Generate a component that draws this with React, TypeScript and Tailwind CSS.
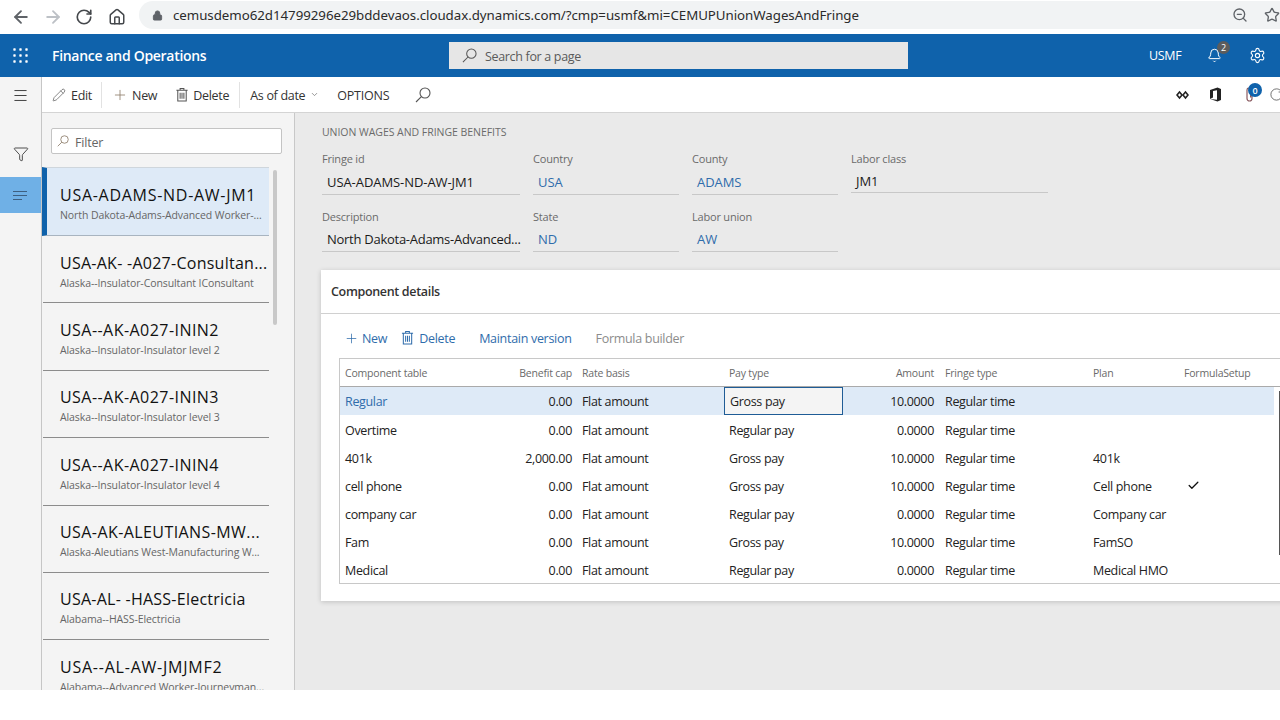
import React from "react";
import { ArrowLeft, ArrowRight, RotateCw, Home, Lock, ZoomOut, Star, Bell, Settings, Pencil, Plus, ChevronDown, Menu, Funnel, Check } from "lucide-react";

const items = [
  ["USA-ADAMS-ND-AW-JM1", "North Dakota-Adams-Advanced Worker-...", "tracking-[0.72px]"],
  ["USA-AK- -A027-Consultan...", "Alaska--Insulator-Consultant IConsultant", "tracking-[0.26px]"],
  ["USA--AK-A027-ININ2", "Alaska--Insulator-Insulator level 2", "tracking-[0.45px]"],
  ["USA--AK-A027-ININ3", "Alaska--Insulator-Insulator level 3", "tracking-[0.45px]"],
  ["USA--AK-A027-ININ4", "Alaska--Insulator-Insulator level 4", "tracking-[0.45px]"],
  ["USA-AK-ALEUTIANS-MW...", "Alaska-Aleutians West-Manufacturing W...", "tracking-[0.42px]"],
  ["USA-AL- -HASS-Electricia", "Alabama--HASS-Electricia", "tracking-[0.25px]"],
  ["USA--AL-AW-JMJMF2", "Alabama--Advanced Worker-Journeyman...", "tracking-[0.77px]"],
];

const rows = [
  ["Regular", "0.00", "Flat amount", "Gross pay", "10.0000", "Regular time", "", false],
  ["Overtime", "0.00", "Flat amount", "Regular pay", "0.0000", "Regular time", "", false],
  ["401k", "2,000.00", "Flat amount", "Gross pay", "10.0000", "Regular time", "401k", false],
  ["cell phone", "0.00", "Flat amount", "Gross pay", "10.0000", "Regular time", "Cell phone", true],
  ["company car", "0.00", "Flat amount", "Regular pay", "0.0000", "Regular time", "Company car", false],
  ["Fam", "0.00", "Flat amount", "Gross pay", "10.0000", "Regular time", "FamSO", false],
  ["Medical", "0.00", "Flat amount", "Regular pay", "0.0000", "Regular time", "Medical HMO", false],
] as const;

const gridCols = "grid grid-cols-[138px_99px_147px_119px_96px_149px_91px_101px]";

function SearchGlyph({ className }: { className: string }) {
  return (
    <svg className={className} viewBox="0 0 16 16" fill="none" stroke="currentColor" strokeWidth="1.1">
      <circle cx="10" cy="6" r="5" />
      <path d="M6.4 9.6 L1 15" />
    </svg>
  );
}

function TrashGlyph({ className }: { className: string }) {
  return (
    <svg className={className} viewBox="0 0 14 16" fill="none" stroke="currentColor" strokeWidth="1.1">
      <path d="M1 3.5 H13 M5 3.5 V1.5 H9 V3.5 M2.5 3.5 V15 H11.5 V3.5 M5 6 V12.5 M7 6 V12.5 M9 6 V12.5" />
    </svg>
  );
}

function Field({ label, value, blue, width, tight, second, short }: { label: string; value: string; blue?: boolean; width: string; tight?: boolean; second?: boolean; short?: boolean }) {
  return (
    <div className={width}>
      <div className={`${second ? "h-[19px] pt-px" : "h-[18px]"} box-border text-[11px] leading-[18px] tracking-[-0.2px] text-[#6a6a6a]`}>{label}</div>
      <div className={`${short ? "h-[25px] pt-[3px]" : second ? "h-[26px] pt-[3px]" : "h-[27px] pt-[4px]"} box-border whitespace-nowrap border-b border-[#c8c8c8] pl-[5px] text-[13px] leading-[20px] ${tight ? "tracking-[-0.27px]" : "tracking-[-0.07px]"} ${blue ? "text-[#2f6cab]" : "text-[#1a1a1a]"}`}>{value}</div>
    </div>
  );
}

export default function App() {
  return (
    <div className="h-[720px] w-[1280px] overflow-hidden bg-white font-['Open_Sans','Noto_Sans',sans-serif]">
      <div className="flex h-[690px] flex-col overflow-hidden">
        {/* browser bar */}
        <div className="flex h-[34px] shrink-0 items-center overflow-hidden bg-white">
          <div className="flex w-[139px] shrink-0 items-center text-[#5f6368]">
            <ArrowLeft className="ml-[11px] h-[20px] w-[20px]" strokeWidth={2.2} />
            <ArrowRight className="ml-[12px] h-[20px] w-[20px] text-[#bdc1c6]" strokeWidth={2.2} />
            <RotateCw className="ml-[12px] h-[18px] w-[18px] text-[#45484c]" strokeWidth={2.2} />
            <Home className="ml-[15px] h-[18px] w-[18px] text-[#45484c]" strokeWidth={2} />
          </div>
          <div className="flex h-[28px] w-[1160px] shrink-0 -translate-y-[2px] items-center rounded-l-full bg-[#f1f3f4] pl-[13px] *:shrink-0">
            <Lock className="h-[11px] w-[11px] text-[#5f6368]" fill="#5f6368" />
            <span className="ml-[10px] w-[1059px] whitespace-nowrap pt-[2px] text-[13.3px] tracking-[-0.04px] text-[#2b2b2b] font-['Noto_Sans',sans-serif]">cemusdemo62d14799296e29bddevaos.cloudax.dynamics.com/?cmp=usmf&amp;mi=CEMUPUnionWagesAndFringe</span>
            <ZoomOut className="h-[16px] w-[16px] text-[#5f6368]" />
            <Star className="ml-[16px] h-[16px] w-[16px] text-[#5f6368]" />
          </div>
        </div>
        {/* blue header */}
        <div className="flex h-[43px] shrink-0 items-center bg-[#0f62ab] text-white">
          <svg className="ml-[13px] h-[15px] w-[15px]" viewBox="0 0 15 15" fill="#fff">
            {[1.5, 7.5, 13.5].flatMap((y) => [1.5, 7.5, 13.5].map((x) => <rect key={`${x}-${y}`} x={x - 1.2} y={y - 1.2} width="2.4" height="2.4" rx="0.6" />))}
          </svg>
          <div className="ml-[24px] w-[397px] text-[14px] font-semibold tracking-[-0.3px]">Finance and Operations</div>
          <div className="flex h-[27px] w-[459px] items-center bg-[#e6e6e6] pl-[13px] text-[#555]">
            <SearchGlyph className="h-[15px] w-[15px]" />
            <span className="ml-[8px] pt-[3px] text-[12.5px] tracking-[-0.33px] text-[#5a5a5a]">Search for a page</span>
          </div>
          <div className="ml-[241px] w-[34px] pt-[2px] text-[12.5px] tracking-[-0.3px]">USMF</div>
          <div className="relative ml-[24px] h-[16px] w-[16px]">
            <Bell className="h-[15px] w-[15px]" strokeWidth={1.6} />
            <div className="absolute -right-[7px] -top-[7px] flex h-[13px] w-[13px] items-center justify-center rounded-full bg-[#5c5c5c] text-[9px] leading-none">2</div>
          </div>
          <Settings className="ml-[26px] h-[17px] w-[17px]" strokeWidth={1.6} />
        </div>
        <div className="flex min-h-0 flex-1">
          {/* rail */}
          <div className="w-[42px] shrink-0 border-r border-[#c6c6c6] bg-[#f4f4f4]">
            <div className="flex h-[36px] items-center justify-center">
              <Menu className="h-[17px] w-[17px] text-[#333]" strokeWidth={1.3} />
            </div>
            <div className="flex h-[64px] items-center justify-center pt-[18px]">
              <Funnel className="h-[16px] w-[16px] text-[#333]" strokeWidth={1.3} />
            </div>
            <div className="flex h-[36px] flex-col items-start justify-center gap-[3px] bg-[#6fb0e6] pl-[13px]">
              <div className="h-[1px] w-[14px] bg-[#3d5f80]" />
              <div className="h-[1px] w-[14px] bg-[#3d5f80]" />
              <div className="h-[1px] w-[9px] bg-[#3d5f80]" />
            </div>
          </div>
          <div className="flex min-w-0 flex-1 flex-col">
            {/* toolbar */}
            <div className="flex h-[36px] shrink-0 items-center overflow-hidden whitespace-nowrap border-b border-[#d4d4d4] bg-white text-[12.5px] tracking-[-0.3px] text-[#333] *:shrink-0">
              <Pencil className="ml-[10px] h-[14px] w-[14px] text-[#555]" strokeWidth={1.2} />
              <span className="ml-[5px] pt-[3px]">Edit</span>
              <div className="ml-[9px] h-[26px] w-px bg-[#e2e2e2]" />
              <Plus className="ml-[10px] h-[16px] w-[16px] text-[#8a7a66]" strokeWidth={1.2} />
              <span className="ml-[4px] pt-[3px]">New</span>
              <TrashGlyph className="ml-[18px] h-[15px] w-[14px] text-[#555]" />
              <span className="ml-[4px] pt-[3px]">Delete</span>
              <div className="ml-[10px] h-[26px] w-px bg-[#e2e2e2]" />
              <span className="ml-[10px] w-[57px] pt-[3px]">As of date</span>
              <ChevronDown className="ml-[3px] h-[9px] w-[9px] text-[#777]" />
              <span className="ml-[18px] w-[54px] pt-[3px] tracking-[-0.2px]">OPTIONS</span>
              <SearchGlyph className="ml-[24px] h-[16px] w-[16px] text-[#555]" />
              <svg className="ml-[745px] h-[10px] w-[13px]" viewBox="0 0 13 10" fill="none" stroke="#222" strokeWidth="1.6">
                <path d="M3.5 2 L6 5 L3.5 8 L1 5 Z" />
                <path d="M9.5 2 L12 5 L9.5 8 L7 5 Z" />
              </svg>
              <svg className="ml-[20px] h-[15px] w-[13px]" viewBox="0 0 13 15">
                <path d="M1 3 L8.5 0.5 L12 2 V13 L8.5 14.5 L1 12 L8 12.8 V3.2 L4 4 V10.5 L1 12 Z" fill="#222" />
              </svg>
              <div className="relative ml-[20px] h-[15px] w-[15px]">
                <svg className="h-[15px] w-[15px] text-[#8a5a60]" viewBox="0 0 15 15" fill="none" stroke="currentColor" strokeWidth="1.2">
                  <path d="M10 5 V11.5 A2.5 2.5 0 0 1 5 11.5 V3 A1.8 1.8 0 0 1 8.6 3 V10.5" />
                </svg>
                <div className="absolute -right-[5px] -top-[4px] flex h-[14px] w-[14px] items-center justify-center rounded-full bg-[#0f62ab] text-[9px] font-semibold leading-none tracking-normal text-white">0</div>
              </div>
              <RotateCw className="ml-[12px] h-[15px] w-[15px] text-[#444]" strokeWidth={1.2} />
            </div>
            <div className="flex min-h-0 flex-1">
              {/* list panel */}
              <div className="w-[253px] shrink-0 border-r border-[#c8c8c8] bg-[#f4f4f4]">
                <div className="pl-[9px] pr-[12px] pt-[15px]">
                  <div className="flex h-[26px] w-[231px] items-center rounded-[2px] border border-[#c4c4c4] bg-white pl-[5px]">
                    <SearchGlyph className="h-[12px] w-[12px] text-[#8a7a66]" />
                    <span className="ml-[6px] pt-[5px] text-[12.5px] tracking-[-0.2px] text-[#666]">Filter</span>
                  </div>
                </div>
                <div className="mt-[13px] flex">
                  <div className="w-[227px]">
                    {items.map(([t, s, tr], i) => (
                      <div key={i} className={`box-border flex flex-col justify-start border-b ${i === 0 ? "h-[69px] border-[#a8b4c0] border-l-[5px] border-l-[#0f62ab] border-t border-t-[#cfd6dc] bg-[#deeaf7] pl-[13px] pt-[16px]" : "ml-px h-[67.4px] border-[#8c8c8c] pl-[17px] pt-[15.5px]"}`}>
                        <div className={`h-[22px] whitespace-nowrap text-[16px] leading-[22px] text-[#111] ${tr}`}>{t}</div>
                        <div className="mt-[1px] h-[16px] whitespace-nowrap text-[10.5px] leading-[16px] tracking-[-0.09px] text-[#666]">{s}</div>
                      </div>
                    ))}
                  </div>
                  <div className="ml-[4px] mt-[3px] h-[155px] w-[4px] rounded-full bg-[#c8c8c8]" />
                </div>
              </div>
              {/* main */}
              <div className="min-w-0 flex-1 overflow-hidden bg-[#eaeaea] pl-[27px]">
                <div className="h-[27px] pt-[11px] text-[10.5px] leading-[16px] tracking-[-0.04px] text-[#6a6a6a]">UNION WAGES AND FRINGE BENEFITS</div>
                <div className="mt-[10px] flex gap-[13px]">
                  <Field width="w-[198px]" label="Fringe id" value="USA-ADAMS-ND-AW-JM1" />
                  <Field width="w-[146px]" label="Country" value="USA" blue />
                  <Field width="w-[146px]" label="County" value="ADAMS" blue />
                  <div className="w-[197px]"><Field width="w-[197px]" label="Labor class" value="JM1" short /></div>
                </div>
                <div className="mt-[12px] flex gap-[13px]">
                  <Field width="w-[198px]" label="Description" value="North Dakota-Adams-Advanced..." tight second />
                  <Field width="w-[146px]" label="State" value="ND" blue second />
                  <Field width="w-[146px]" label="Labor union" value="AW" blue second />
                </div>
                {/* card */}
                <div className="-ml-px mt-[18px] h-[331px] w-[1000px] bg-white shadow-[0_1px_5px_rgba(0,0,0,0.18)]">
                  <div className="box-border flex h-[44px] items-center border-b border-[#d0d0d0] pl-[10px] pt-[2px] text-[12.5px] font-semibold tracking-[-0.33px] text-[#333]">Component details</div>
                  <div className="box-border flex h-[44px] items-center pl-[23px] pt-[4px] text-[12.5px] tracking-[-0.3px] text-[#2f6cab]">
                    <Plus className="h-[15px] w-[15px]" strokeWidth={1.2} />
                    <span className="ml-[3px] pt-[3px]">New</span>
                    <TrashGlyph className="ml-[14px] -mt-px h-[15px] w-[13px]" />
                    <span className="ml-[5px] pt-[3px]">Delete</span>
                    <span className="ml-[24px] pt-[3px]">Maintain version</span>
                    <span className="ml-[24px] pt-[3px] text-[#8c8c8c]">Formula builder</span>
                  </div>
                  <div className="ml-[18px] w-[1000px] border-b border-l border-t border-[#c8c8c8]">
                    <div className={`${gridCols} box-border h-[28px] items-center border-b border-[#aaa] pt-[2px] text-[10.5px] tracking-[-0.2px] text-[#6a6a6a]`}>
                      <div className="pl-[5px]">Component table</div>
                      <div className="pr-[5px] text-right">Benefit cap</div>
                      <div className="pl-[5px]">Rate basis</div>
                      <div className="pl-[5px]">Pay type</div>
                      <div className="pr-[5px] text-right">Amount</div>
                      <div className="pl-[6px]">Fringe type</div>
                      <div className="pl-[5px]">Plan</div>
                      <div className="pl-[5px]">FormulaSetup</div>
                    </div>
                    <div className="flex">
                      <div className="w-[934px]">
                        {rows.map((r, i) => (
                          <div key={i} className={`${gridCols} box-border ${i === 1 ? "h-[29px] pt-[3px]" : i === 6 ? "h-[27px] pt-[4px]" : "h-[28px] pt-[2px]"} items-center text-[12.5px] tracking-[-0.33px] text-[#222] ${i === 0 ? "bg-[#deeaf7]" : ""}`}>
                            <div className={`pl-[5px] ${i === 0 ? "text-[#2f6cab]" : ""}`}>{r[0]}</div>
                            <div className="pr-[5px] text-right">{r[1]}</div>
                            <div className="pl-[5px]">{r[2]}</div>
                            <div className={i === 0 ? "-mt-[2px] box-border flex h-[28px] items-center border border-[#1f5c96] bg-[#f4f4f4] pl-[5px] pt-[2px]" : "pl-[5px]"}>{r[3]}</div>
                            <div className="pr-[5px] text-right">{r[4]}</div>
                            <div className="pl-[6px]">{r[5]}</div>
                            <div className="pl-[5px]">{r[6]}</div>
                            <div className="pl-[8px]">{r[7] ? <Check className="-mt-[3px] h-[13px] w-[13px] text-[#111]" strokeWidth={2.4} /> : null}</div>
                          </div>
                        ))}
                      </div>
                      <div className="ml-[5px] mt-[4px] h-[164px] w-px bg-[#555]" />
                    </div>
                  </div>
                </div>
              </div>
            </div>
          </div>
        </div>
      </div>
    </div>
  );
}
